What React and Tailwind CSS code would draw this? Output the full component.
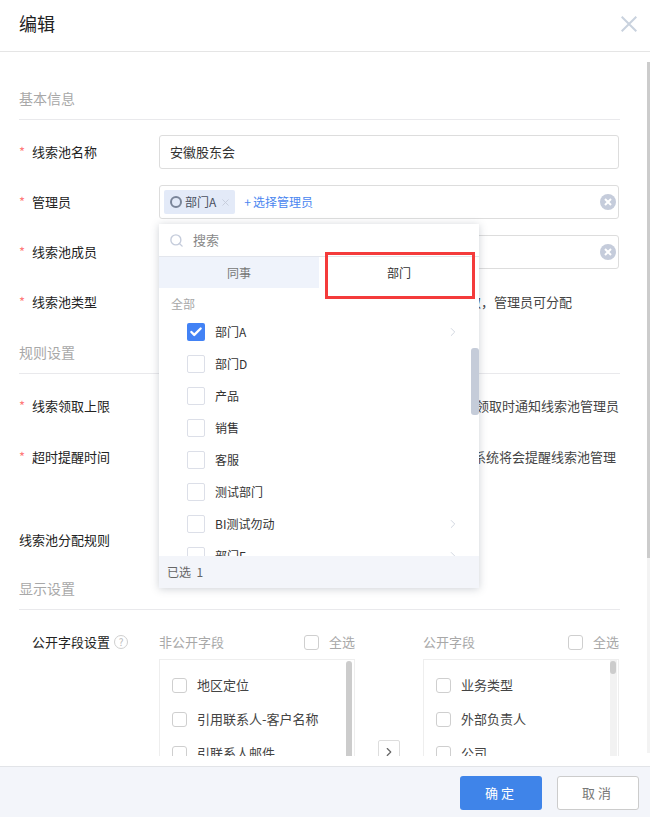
import React from 'react';
import { Check, ChevronRight, Search, X } from 'lucide-react';

const font = { fontFamily: '"Noto Sans CJK SC", "Liberation Sans", sans-serif' };

function Section({ title, className = '' }) {
  return (
    <div className={`-mr-px h-[31px] border-b border-[#e9e9ec] text-[14px] leading-[19px] text-[#a8a8a8] ${className}`}>{title}</div>
  );
}

function Row({ label, required = true, children, className = '' }) {
  return (
    <div className={`flex h-[34px] items-center ${className}`}>
      <div className="flex w-[140px] shrink-0 items-center pb-px text-[13px] text-[#222]">
        {required && <span className="w-[13px] text-[13px] leading-none text-[#ff7a7a]">*</span>}
        <span>{label}</span>
      </div>
      <div className="flex min-w-0 flex-1 items-center">{children}</div>
    </div>
  );
}

function Clear() {
  return (
    <svg width="16" height="16" viewBox="0 0 16 16" className="absolute right-[2px] top-[8px]">
      <circle cx="8" cy="8" r="8" fill="#c5ccdb" />
      <path d="M5 5l6 6M11 5l-6 6" stroke="#fff" strokeWidth="2" />
    </svg>
  );
}

function Box({ size = 'w-[15px] h-[15px]' }) {
  return <span className={`${size} block shrink-0 rounded-[3px] border border-[#cfcfcf] bg-white`} />;
}

function Transfer({ title, items, thumb, track }) {
  return (
    <div className="w-[196px] shrink-0">
      <div className="flex h-[34px] items-center text-[13px] text-[#a8a8a8]">
        <span className="flex-1">{title}</span>
        <Box size="w-[15px] h-[15px]" />
        <span className="ml-[10px]">全选</span>
      </div>
      <div className="relative h-[200px] border border-[#eeeeee] pt-[8px]">
        {track && <span className="absolute right-[1px] top-0 h-full w-[7px] bg-[#f2f2f2]" />}
        <span className={`absolute right-[2px] top-[1px] w-[6px] rounded-[3px] bg-[#cccccc] ${thumb}`} />
        {items.map((t) => (
          <div key={t} className="flex h-[34px] items-center pl-[12px] text-[13px] text-[#444]">
            <Box />
            <span className="ml-[10px]">{t}</span>
          </div>
        ))}
      </div>
    </div>
  );
}

function Dept({ name, checked, arrow }) {
  return (
    <div className="flex h-[32px] shrink-0 items-center pl-[28px] pr-[19px] text-[12px] text-[#333]">
      {checked ? (
        <span className="flex h-[18px] w-[18px] items-center justify-center rounded-[2px] bg-[#4282f5]">
          <Check size={14} color="#fff" strokeWidth={4} />
        </span>
      ) : (
        <span className="block h-[18px] w-[18px] rounded-[2px] border border-[#dcdfe8] bg-white" />
      )}
      <span className="ml-[10px] flex-1">{name}</span>
      {arrow && <ChevronRight size={14} color="#ccd1dc" strokeWidth={1.5} />}
    </div>
  );
}

export default function App() {
  return (
    <div style={font} className="relative flex h-[817px] w-[650px] flex-col overflow-hidden bg-white">
      <header className="flex h-[52px] shrink-0 items-center justify-between border-b border-[#e5e5e5] pb-[4px] pl-[19px] pr-[13px]">
        <h1 className="text-[18px] text-[#222]">编辑</h1>
        <svg width="16" height="16" viewBox="0 0 16 16" fill="none">
          <path d="M0.7 0.7l14.6 14.6M15.3 0.7L0.7 15.3" stroke="#c9d2de" strokeWidth="2" />
        </svg>
      </header>

      <main className="min-h-0 flex-1 pb-[10px]">
        <div className="h-full overflow-hidden pl-[19px] pr-[31px] pt-[37px]">
          <Section title="基本信息" />
          <div className="mt-[15px] flex flex-col gap-[16px]">
            <Row label="线索池名称">
              <div className="flex h-[34px] w-full items-center rounded-[3px] border border-[#dddddd] pl-[10px] text-[13px] text-[#333]">安徽股东会</div>
            </Row>
            <Row label="管理员">
              <div className="relative flex h-[34px] w-full items-center rounded-[3px] border border-[#dddddd] pl-[4px]">
                <span className="flex h-[24px] items-center rounded-[2px] bg-[#e3eaf8] pl-[6px] pr-[4px] text-[12px] text-[#4a5060]">
                  <span className="mr-[3px] block h-[12px] w-[12px] rounded-full border-2 border-[#7a8599]" />
                  部门A
                  <X size={11} color="#c5ccdb" strokeWidth={2} className="ml-[4px]" />
                </span>
                <span className="ml-[9px] text-[12px] text-[#4a86f0]">+<span className="ml-[2px]">选择管理员</span></span>
                <Clear />
              </div>
            </Row>
            <Row label="线索池成员">
              <div className="relative h-[34px] w-full rounded-[3px] border border-[#dddddd]">
                <Clear />
              </div>
            </Row>
            <Row label="线索池类型">
              <div className="flex w-full justify-end whitespace-nowrap pr-[47px] text-[13px] text-[#444]">私海：线索不可领取，管理员可分配</div>
            </Row>
          </div>
          <Section title="规则设置" className="mt-[24px]" />
          <Row label="线索领取上限" className="mt-[15px]">
            <div className="flex w-full justify-end whitespace-nowrap text-[13px] text-[#444]">领取时通知线索池管理员</div>
          </Row>
          <Row label="超时提醒时间" className="mt-[17px]">
            <div className="flex w-full justify-end whitespace-nowrap pr-[3px] text-[13px] text-[#444]">系统将会提醒线索池管理</div>
          </Row>
          <Row label="线索池分配规则" required={false} className="mt-[49px]" />
          <Section title="显示设置" className="mt-[22px]" />
          <div className="mt-[15px] flex">
            <div className="flex h-[34px] w-[140px] shrink-0 items-center pl-[13px] text-[13px] text-[#222]">
              公开字段设置
              <span className="ml-[4px] flex h-[14px] w-[14px] items-center justify-center rounded-full border border-[#cfcfcf] text-[10px] leading-none text-[#bbbbbb]">?</span>
            </div>
            <Transfer title="非公开字段" thumb="h-[190px]" items={['地区定位', '引用联系人-客户名称', '引联系人邮件']} />
            <div className="flex w-[68px] shrink-0 justify-center pt-[115px]">
              <span className="flex h-[24px] w-[22px] items-center justify-center rounded-[2px] border border-[#dddddd]">
                <ChevronRight size={14} color="#666" strokeWidth={2} />
              </span>
            </div>
            <Transfer title="公开字段" track thumb="h-[13px]" items={['业务类型', '外部负责人', '公司']} />
          </div>
        </div>
      </main>

      <footer className="flex h-[51px] shrink-0 items-start justify-end gap-[15px] border-t border-[#e2e4e8] bg-[#f3f5fa] pr-[11px] pt-[9px]">
        <button className="h-[34px] w-[82px] rounded-[3px] bg-[#3f84e9] text-[13px] tracking-[3px] text-white">确定</button>
        <button className="h-[34px] w-[82px] rounded-[3px] border border-[#cccccc] bg-white text-[13px] tracking-[3px] text-[#777]">取消</button>
      </footer>

      {/* page scrollbar */}
      <div className="absolute right-0 top-[62px] h-[691px] w-[3px] bg-[#f3f3f3]">
        <div className="h-[496px] w-full bg-[#cccccc]" />
      </div>

      {/* dropdown */}
      <div className="absolute left-[159px] top-[224px] flex h-[364px] w-[320px] flex-col bg-white shadow-[0_1px_8px_rgba(60,70,90,0.25)]">
        <div className="flex h-[33px] shrink-0 items-center border-b border-[#e3e6ed] pl-[10px] text-[13px] text-[#888]">
          <Search size={15} color="#c5ccdb" strokeWidth={2.2} />
          <span className="ml-[9px]">搜索</span>
        </div>
        <div className="flex h-[31px] shrink-0 text-[12px]">
          <div className="flex w-[160px] items-center justify-center bg-[#eff3fb] text-[#777]">同事</div>
          <div className="flex w-[160px] items-center justify-center text-[#333]">部门</div>
        </div>
        <div className="relative flex min-h-0 flex-1 flex-col overflow-hidden">
          <div className="flex h-[28px] shrink-0 items-center pl-[12px] pt-[4px] text-[12px] text-[#a8a8a8]">全部</div>
          <Dept name="部门A" checked arrow />
          <Dept name="部门D" />
          <Dept name="产品" />
          <Dept name="销售" />
          <Dept name="客服" />
          <Dept name="测试部门" />
          <Dept name="BI测试勿动" arrow />
          <Dept name="部门E" arrow />
          <span className="absolute right-0 top-[60px] h-[67px] w-[8px] rounded-[3px] bg-[#c5ccd9]" />
        </div>
        <div className="flex h-[32px] shrink-0 items-center bg-[#f3f5fa] pl-[8px] text-[12px] text-[#666]">已选&nbsp;&nbsp;1</div>
      </div>

      {/* annotation */}
      <div className="absolute left-[325px] top-[252px] h-[47px] w-[150px] border-[3px] border-[#f43b3b]" />
    </div>
  );
}
